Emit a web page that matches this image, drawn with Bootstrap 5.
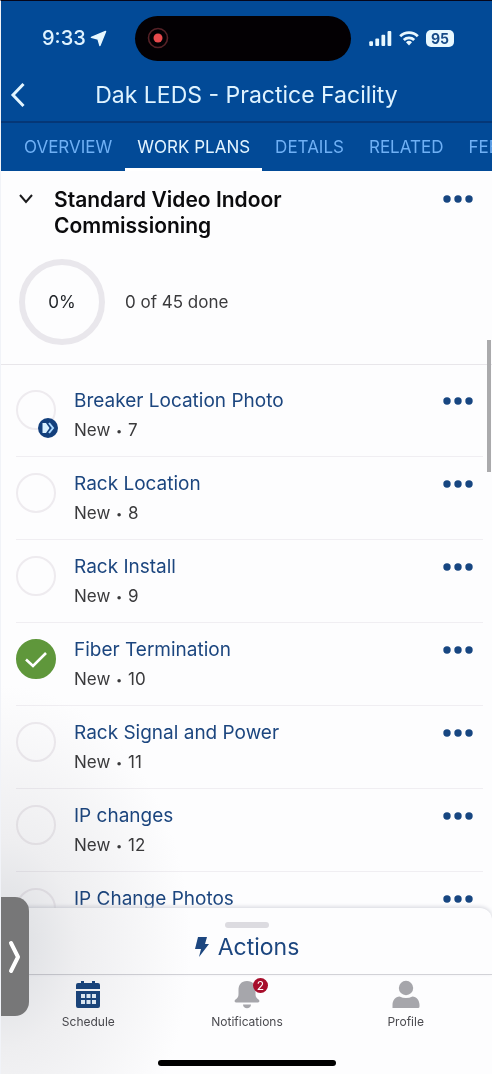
<!DOCTYPE html>
<html lang="en">
<head>
<meta charset="utf-8">
<meta name="viewport" content="width=device-width, initial-scale=1">
<title>Dak LEDS - Practice Facility</title>
<link href="https://cdn.jsdelivr.net/npm/bootstrap@5.3.0/dist/css/bootstrap.min.css" rel="stylesheet">
<style>
  :root { --brand: #024a97; --ink: #1c467f; --line: #f0eef2; }
  body { font-family: Inter, "Liberation Sans", sans-serif; color: #3a3a3c; background: #fdfdfe; font-size: 17px; }
  .app-shell { border-top: 1px solid #05061a; border-left: 1px solid #f1f3f8; }
  .app-top { background: var(--brand); color: #dff3ff; }
  .status-bar { height: 74px; }
  .status-left { width: 134px; padding-left: 41px; gap: 4px; }
  .status-right { width: 141px; padding-left: 18px; gap: 7px; }
  .clock { font-size: 20px; font-weight: 500; line-height: 28px; }
  .island { height: 45px; background: #030003; padding-left: 12px; }
  .cell { background: #e8f8ff; color: #164a87; font-size: 14px; font-weight: 700; line-height: 17px; border-radius: 5px; padding: 0 5px; }
  .title-bar { height: 48px; border-bottom: 2px solid #053777; }
  .title-bar h1 { font-size: 23px; line-height: 28px; font-weight: 400; padding-top: 6px; }
  .back-btn { width: 32px; height: 40px; left: 0; top: 0; }
  .app-tabs { height: 48px; gap: 1px; padding-left: 11px; overflow: hidden; }
  .app-tabs .nav-link { color: #6fb0f5; font-size: 17px; line-height: 22px; padding: 13px 12px 10px; border-bottom: 3px solid transparent; white-space: nowrap; }
  .app-tabs .nav-link.active { color: #e2f4ff; border-color: #fff; }
  .plan-head { padding: 16px 18px 0; }
  .plan-head h2 { font-size: 21px; line-height: 26px; font-weight: 600; color: #0b0b0d; }
  .collapse-btn { margin-right: 21px; }
  .ring { width: 86px; height: 86px; border: 6px solid #e9e7ec; }
  .plan-progress { padding: 20px 18px 19px; border-bottom: 1px solid #e8e6ea; gap: 20px; }
  .small-text { font-size: 17px; line-height: 22px; }
  .task-list { padding: 9px 9px 0 15px; }
  .task-row { height: 83px; padding: 14px 9px 0 0; border-bottom: 1px solid var(--line); }
  .task-link { font-size: 19px; line-height: 26px; color: var(--ink); text-decoration: none; }
  .task-meta { font-size: 17px; line-height: 22px; margin-top: 5px; }
  .task-dot { font-size: 11px; padding: 0 1px; vertical-align: 1px; }
  .task-check { position: relative; margin-top: 2px; margin-right: 18px; }
  .task-check .form-check-input { width: 40px; height: 40px; margin: 0; border: 2px solid #eeebef; border-radius: 50%; background-color: transparent; display: block; }
  .task-check .form-check-input:checked { background-color: #5f973b; border-color: #5f973b; background-size: 30px;
    background-image: url("data:image/svg+xml,%3csvg xmlns='http://www.w3.org/2000/svg' viewBox='0 0 30 30'%3e%3cpath d='M5 15.500l7 6.500L25 9' fill='none' stroke='%23fff' stroke-width='2.600'/%3e%3c/svg%3e"); }
  .task-flag { right: -2px; bottom: -8px; }
  .more-btn { width: 40px; height: 24px; margin-right: -4px; }
  .task-row .more-btn { height: 26px; }
  .action-sheet { background: #fdfdfe; border-radius: 12px 12px 0 0; box-shadow: 0 -1px 4px #d3d4dc; height: 66px; padding-top: 14px; }
  .grabber { width: 44px; height: 6px; background: #dcdbe0; }
  .action-btn { color: var(--ink); font-size: 23px; line-height: 28px; margin-top: 5px; }
  .app-nav { border-top: 1px solid #d2d2d6; padding: 5px 7px 0 8px; height: 86px; }
  .app-nav a { color: #4b4b50; font-size: 12px; line-height: 16px; text-decoration: none; }
  .app-nav svg { display: block; margin: 0 auto 5px; }
  .note-count { left: 50%; top: -2px; margin-left: 6px; width: 15px; height: 15px; font-size: 12px; line-height: 15px; background: #a70d2b; color: #fff; text-align: center; }
  .home-bar { width: 178px; height: 6px; background: #000; margin-bottom: 8px; }
  .drawer-btn { left: -1px; bottom: 58px; width: 29px; height: 119px; background: #777778; border-radius: 0 14px 14px 0; }
  .scroll-thumb { right: 1px; top: 169px; width: 4px; height: 132px; background: #aaaaac; }
  .shade { background: radial-gradient(ellipse 190px 260px at 0 88%, #dcdee1 0, #f0f0f1 40%, #fff 100%); pointer-events: none; mix-blend-mode: multiply; inset: 0; }
</style>
</head>
<body>
<svg class="d-none">
  <symbol id="dots" viewBox="0 0 30 8"><g fill="#174681"><circle cx="4" cy="4" r="3.700"/><circle cx="15" cy="4" r="3.700"/><circle cx="26" cy="4" r="3.700"/></g></symbol>
</svg>
<div class="app-shell position-relative vh-100 d-flex flex-column overflow-hidden">
  <header class="app-top flex-shrink-0">
    <div class="status-bar d-flex align-items-center">
      <div class="status-left d-flex align-items-center">
        <span class="clock">9:33</span>
        <svg class="flex-shrink-0" width="17" height="17" viewBox="0 0 18 18"><path d="M16.500 1.500 10.500 16.500 8.500 9.500 1.500 7.800Z" fill="#e8f8ff" stroke="#e8f8ff" stroke-width="1.500" stroke-linejoin="round"/></svg>
      </div>
      <div class="island rounded-pill d-flex align-items-center flex-grow-1">
        <svg width="22" height="22" viewBox="0 0 22 22"><circle cx="11" cy="11" r="9.500" fill="none" stroke="#562127" stroke-width="1.600"/><circle cx="11" cy="11" r="4.500" fill="#e84a4d"/></svg>
      </div>
      <div class="status-right d-flex align-items-center">
        <svg width="23" height="15" viewBox="0 0 24 16" fill="#e8f8ff"><rect y="11" width="4" height="5" rx="1"/><rect x="6.500" y="8" width="4" height="8" rx="1"/><rect x="13" y="4" width="4" height="12" rx="1"/><rect x="19.500" width="4" height="16" rx="1"/></svg>
        <svg width="20" height="15" viewBox="0 0 20 15" fill="none" stroke="#e8f8ff" stroke-width="2.800"><path d="M1.200 5.300a12.500 12.500 0 0 1 17.600 0M4.800 9a7.500 7.500 0 0 1 10.400 0"/><path d="M10 14.500 7 11.300a4.300 4.300 0 0 1 6 0Z" fill="#e8f8ff" stroke="none"/></svg>
        <span class="cell">95</span>
      </div>
    </div>
    <div class="title-bar position-relative text-center">
      <button type="button" class="back-btn btn p-0 border-0 position-absolute" aria-label="Back">
        <svg width="16" height="26" viewBox="0 0 16 26" fill="none" stroke="#e2f5ff" stroke-width="3"><path d="M14.500 2 4 13l10.500 11"/></svg>
      </button>
      <h1 class="m-0">Dak LEDS - Practice Facility</h1>
    </div>
    <ul class="nav app-tabs flex-nowrap">
      <li class="nav-item"><a class="nav-link" href="#">OVERVIEW</a></li>
      <li class="nav-item"><a class="nav-link active" href="#" aria-current="page">WORK PLANS</a></li>
      <li class="nav-item"><a class="nav-link" href="#">DETAILS</a></li>
      <li class="nav-item"><a class="nav-link" href="#">RELATED</a></li>
      <li class="nav-item"><a class="nav-link" href="#">FEED</a></li>
    </ul>
  </header>

  <main class="position-relative flex-grow-1 overflow-hidden">
    <div class="plan-head d-flex align-items-start">
      <button type="button" class="collapse-btn btn p-0 border-0 lh-1" aria-label="Collapse">
        <svg width="14" height="24" viewBox="0 0 14 24" fill="none" stroke="#1b1b1d" stroke-width="2"><path d="m1 8 6 7 6-7"/></svg>
      </button>
      <h2 class="m-0 flex-grow-1 pe-5 me-5">Standard Video Indoor Commissioning</h2>
      <button type="button" class="more-btn btn p-0 border-0 d-flex align-items-center justify-content-center flex-shrink-0" aria-label="More"><svg width="30" height="8"><use href="#dots"/></svg></button>
    </div>
    <div class="plan-progress d-flex align-items-center">
      <div class="ring rounded-circle d-flex align-items-center justify-content-center text-dark small-text">0%</div>
      <div class="small-text">0 of 45 done</div>
    </div>
    <ul class="task-list list-unstyled m-0" id="tasks"></ul>
    <div class="scroll-thumb position-absolute"></div>
  </main>

  <section class="action-sheet flex-shrink-0 position-relative text-center">
    <div class="grabber rounded-pill mx-auto"></div>
    <button type="button" class="action-btn btn p-0 border-0 d-inline-flex align-items-center gap-2">
      <svg width="16" height="22" viewBox="0 0 16 22"><path d="M4 1h9l-2 7h4L5 21l2-8H1Z" fill="#1c467f"/></svg>Actions
    </button>
  </section>
  <nav class="app-nav d-flex flex-shrink-0 text-center">
    <a class="col" href="#">
      <svg width="28" height="29" viewBox="0 0 28 29"><path fill="#1b4780" d="M2 9V5q0-2 2-2h3V1h3v2h8V1h3v2h3q2 0 2 2v4ZM2 11h24v15q0 2-2 2H4q-2 0-2-2Z"/><path fill="#e6f2fc" d="M7 14h4v4H7zm5.500 0h4v4h-4zm5.500 0h4v4h-4zM7 20h4v4H7zm5.500 0h4v4h-4zm5.500 0h4v4h-4z"/></svg>Schedule</a>
    <a class="col position-relative" href="#">
      <svg width="28" height="29" viewBox="0 0 28 29" fill="#a6a6ab"><path d="M14 1c-6 0-8.500 4-8.500 9v4c0 3-1 4-3 5.500-1.500 1-1 3 .5 3h22c1.500 0 2-2 .5-3-2-1.500-3-2.500-3-5.500v-4c0-5-2.500-9-8.500-9ZM10 24.500h8c0 5-8 5-8 0Z"/></svg><span class="note-count rounded-circle position-absolute">2</span>Notifications</a>
    <a class="col" href="#">
      <svg width="28" height="29" viewBox="0 0 28 29" fill="#a6a6ab"><circle cx="14" cy="8" r="7.200"/><path d="M.5 28v-3c0-5 3-8 7-8.500q6.500 3 13 0c4 .5 7 3.500 7 8.500v1.500q0 1.500-1.500 1.500Z"/></svg>Profile</a>
  </nav>
  <div class="home-bar rounded-pill mx-auto flex-shrink-0"></div>
  <div class="shade position-absolute"></div>
  <button type="button" class="drawer-btn btn p-0 border-0 position-absolute" aria-label="Open drawer">
    <svg width="14" height="34" viewBox="0 0 14 34" fill="none" stroke="#fff" stroke-width="4" stroke-linecap="round" stroke-linejoin="round"><path d="m3 3 7 14-7 14"/></svg>
  </button>
</div>
<script>
  const tasks = [
    ["Breaker Location Photo", 7, "next"], ["Rack Location", 8], ["Rack Install", 9],
    ["Fiber Termination", 10, "done"], ["Rack Signal and Power", 11], ["IP changes", 12], ["IP Change Photos", 13]
  ];
  const flag = `<svg class="task-flag position-absolute" width="20" height="20" viewBox="0 0 20 20"><circle cx="10" cy="10" r="10" fill="#133f7c"/><path d="M4.500 5h3.500l3.500 5L8 15H4.500Z" fill="#d9f0ff"/><path d="m11 5 4 5-4 5" fill="none" stroke="#a9d8ff" stroke-width="2"/></svg>`;
  document.getElementById("tasks").innerHTML = tasks.map(([name, n, state]) => `
    <li class="task-row d-flex align-items-start">
      <div class="task-check flex-shrink-0"><input class="form-check-input" type="checkbox" id="t${n}" aria-label="${name}" ${state === "done" ? "checked" : ""}>${state === "next" ? flag : ""}</div>
      <div class="flex-grow-1"><a class="task-link d-block" href="#">${name}</a><div class="task-meta">New <span class="task-dot">•</span> ${n}</div></div>
      <button type="button" class="more-btn btn p-0 border-0 d-flex align-items-center justify-content-center flex-shrink-0" aria-label="More"><svg width="30" height="8"><use href="#dots"/></svg></button>
    </li>`).join("");
</script>
<script src="https://cdn.jsdelivr.net/npm/bootstrap@5.3.0/dist/js/bootstrap.bundle.min.js"></script>
</body>
</html>
